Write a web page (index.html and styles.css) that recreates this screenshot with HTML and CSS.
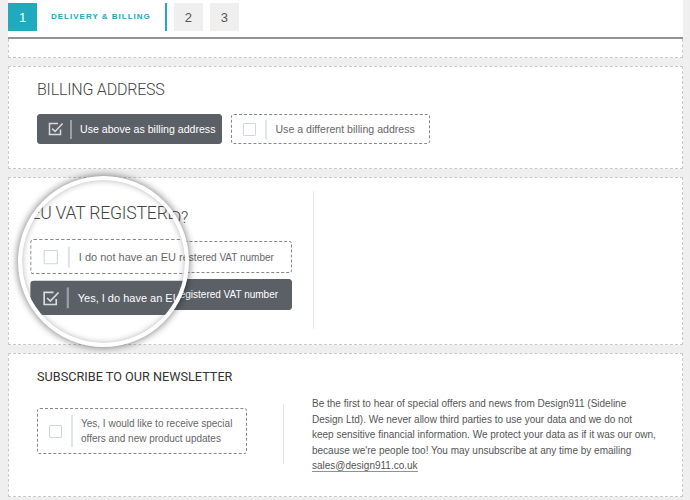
FILE: index.html
```html
<!DOCTYPE html>
<html lang="en">
<head>
  <meta charset="UTF-8">
  <title>Checkout — Delivery &amp; Billing</title>
  <link rel="stylesheet" href="styles.css">
</head>
<body>
  <div class="page">
    <div class="steps">
      <span class="step active">1</span>
      <span class="step-label">Delivery &amp; Billing</span>
      <span class="step">2</span>
      <span class="step">3</span>
    </div>
    <div class="panel panel-end"></div>

    <!-- Billing -->
    <div class="panel billing">
      <h3 class="title">Billing address</h3>
      <div class="options">
        <label class="opt checked">
          <span class="tick"><svg width="16" height="14" viewBox="0 0 16 14"><path d="M10 1.5H1.5v11h11V7.5" fill="none" stroke="#d9dcdf" stroke-width="1.5"/><path d="M4.2 6.6l2.9 2.9L14.6 1.6" fill="none" stroke="#d9dcdf" stroke-width="1.5"/></svg></span>
          <span class="sep"></span>
          <span class="txt">Use above as billing address</span>
        </label>
        <label class="opt">
          <span class="box"></span>
          <span class="sep"></span>
          <span class="txt">Use a different billing address</span>
        </label>
      </div>
    </div>

    <!-- VAT -->
    <div class="panel vat">
      <div class="cols">
        <div class="col">
          <h3 class="title">EU VAT registered?</h3>
          <label class="opt wide">
            <span class="box"></span>
            <span class="sep"></span>
            <span class="txt">I do not have an EU registered VAT number</span>
          </label>
          <label class="opt wide checked">
            <span class="tick"><svg width="16" height="14" viewBox="0 0 16 14"><path d="M10 1.5H1.5v11h11V7.5" fill="none" stroke="#d9dcdf" stroke-width="1.5"/><path d="M4.2 6.6l2.9 2.9L14.6 1.6" fill="none" stroke="#d9dcdf" stroke-width="1.5"/></svg></span>
            <span class="sep"></span>
            <span class="txt">Yes, I do have an EU registered VAT number</span>
          </label>
        </div>
        <div class="col-side"></div>
      </div>

      <div class="lens" aria-hidden="true">
        <div class="lens-view">
          <div class="col">
            <h3 class="title">EU VAT registered?</h3>
            <div class="opt wide">
              <span class="box"></span>
              <span class="sep"></span>
              <span class="txt">I do not have an EU registered VAT number</span>
            </div>
            <div class="opt wide checked">
              <span class="tick"><svg width="16" height="14" viewBox="0 0 16 14"><path d="M10 1.5H1.5v11h11V7.5" fill="none" stroke="#d9dcdf" stroke-width="1.5"/><path d="M4.2 6.6l2.9 2.9L14.6 1.6" fill="none" stroke="#d9dcdf" stroke-width="1.5"/></svg></span>
              <span class="sep"></span>
              <span class="txt">Yes, I do have an EU registered VAT number</span>
            </div>
          </div>
        </div>
      </div>
    </div>

    <!-- Newsletter -->
    <div class="panel news">
      <h4 class="subtitle">Subscribe to our newsletter</h4>
      <div class="news-row">
        <div class="news-opt">
          <label class="opt tall">
            <span class="box"></span>
            <span class="sep"></span>
            <span class="txt">Yes, I would like to receive special offers and new product updates</span>
          </label>
        </div>
        <div class="news-sep"></div>
        <p class="news-text">Be the first to hear of special offers and news from Design911 (Sideline Design Ltd). We never allow third parties to use your data and we do not keep sensitive financial information. We protect your data as if it was our own, because we're people too! You may unsubscribe at any time by emailing <a href="#">sales@design911.co.uk</a></p>
      </div>
    </div>
  </div>
</body>
</html>
```

FILE: styles.css
```css
* { box-sizing: border-box; margin: 0; padding: 0; }
body {
  background: #efefef;
  color: #555;
  font-family: "Liberation Sans", Arial, sans-serif;
}
.page { padding: 0 7px 0 8px; }

/* steps */
.steps {
  display: flex;
  align-items: flex-start;
  height: 39px;
  padding-top: 3px;
  background: #fff;
  border-bottom: 2px solid #8e959a;
}
.step {
  width: 29px; height: 28px;
  display: flex; align-items: center; justify-content: center;
  margin-right: 7px;
  background: #efefef;
  color: #555;
  font-size: 13px;
}
.step.active { background: #21a9be; color: #fff; margin-right: 0; }
.step-label {
  height: 28px;
  line-height: 28px;
  padding: 0 14px;
  margin-right: 7px;
  border-right: 2px solid #21a9be;
  color: #21a9be;
  font-size: 8px;
  font-weight: bold;
  letter-spacing: 1px;
  text-transform: uppercase;
}

/* panels */
.panel {
  background: #fff;
  border: 1px dashed #c9c9c9;
  padding: 13px 28px 24px;
  margin-bottom: 8px;
}
.panel-end { height: 19px; padding: 0; border-top: none; }

.title {
  font-family: Roboto, "Liberation Sans", sans-serif;
  font-weight: 300;
  font-size: 16px;
  line-height: 20px;
  letter-spacing: -0.2px;
  color: #444;
  text-transform: uppercase;
  margin-bottom: 14px;
}
.options { display: flex; gap: 9px; }

/* option buttons */
.opt {
  display: flex;
  align-items: center;
  height: 30px;
  padding: 0 14px 0 11px;
  border: 1px dashed #888;
  border-radius: 3px;
  color: #666;
  font-size: 10.6px;
  cursor: pointer;
}
.opt .txt { white-space: nowrap; }
.opt.checked {
  background: #5b6067;
  border: 1px solid #5b6067;
  color: #fff;
  padding: 0 6px 0 10px;
}
.box {
  width: 13px; height: 13px;
  border: 1.5px solid #cfd7db;
  border-radius: 1px;
  flex: none;
}
.tick { display: flex; flex: none; }
.sep {
  width: 2px; height: 19px;
  margin: 0 8px 0 9px;
  background: #e0e5e8;
  flex: none;
}
.checked .sep { background: #9aa0a6; margin-left: 6px; }

/* vat */
.vat { position: relative; padding-bottom: 15px; }
.cols { display: flex; }
.col {
  width: 277px;
  padding: 17px 21px 19px 0;
  border-right: 1px solid #e9e9e9;
}
.col .title { margin-bottom: 13px; }
.opt.wide { height: 32px; margin-bottom: 6px; padding-right: 0; font-size: 10px; }
.opt.wide.checked { height: 31px; margin-bottom: 0; }
.col-side { flex: 1; }

/* magnifier */
.lens {
  position: absolute;
  left: 9px; top: -2px;
  width: 171px; height: 171px;
  border: 4px solid #fff;
  border-radius: 50%;
  overflow: hidden;
  background: #fff;
  box-shadow: 0 0 7px 1px rgba(0,0,0,0.45), inset 0 0 6px rgba(0,0,0,0.3);
  z-index: 2;
}
.lens-view {
  position: absolute;
  left: 15px; top: 11px;
  transform: scale(1.1);
  transform-origin: 66px 70px;
}
.lens-view .col { border-right: none; }

/* newsletter */
.news { padding: 15px 26px 22px 28px; }
.subtitle {
  font-family: Roboto, "Liberation Sans", sans-serif;
  font-weight: 400;
  font-size: 12.7px;
  line-height: 16px;
  color: #333;
  text-transform: uppercase;
  margin-bottom: 11px;
}
.news-row { display: flex; align-items: flex-start; }
.news-opt { width: 246px; padding-top: 12px; }
.opt.tall {
  width: 210px; height: 46px;
  padding: 6px 4px 6px 11px;
  align-items: stretch;
  font-size: 10px;
}
.opt.tall .box { align-self: center; }
.opt.tall .sep { height: auto; }
.opt.tall .txt { align-self: center; line-height: 15px; white-space: normal; }
.news-sep {
  width: 1px; height: 60px;
  margin-top: 8px;
  background: #e6e6e6;
}
.news-text {
  flex: 1;
  margin-left: 28px;
  font-size: 10px;
  line-height: 15.6px;
  color: #555;
}
.news-text a {
  color: #555;
  text-decoration: none;
  border-bottom: 1px solid #8a93a0;
}
```
